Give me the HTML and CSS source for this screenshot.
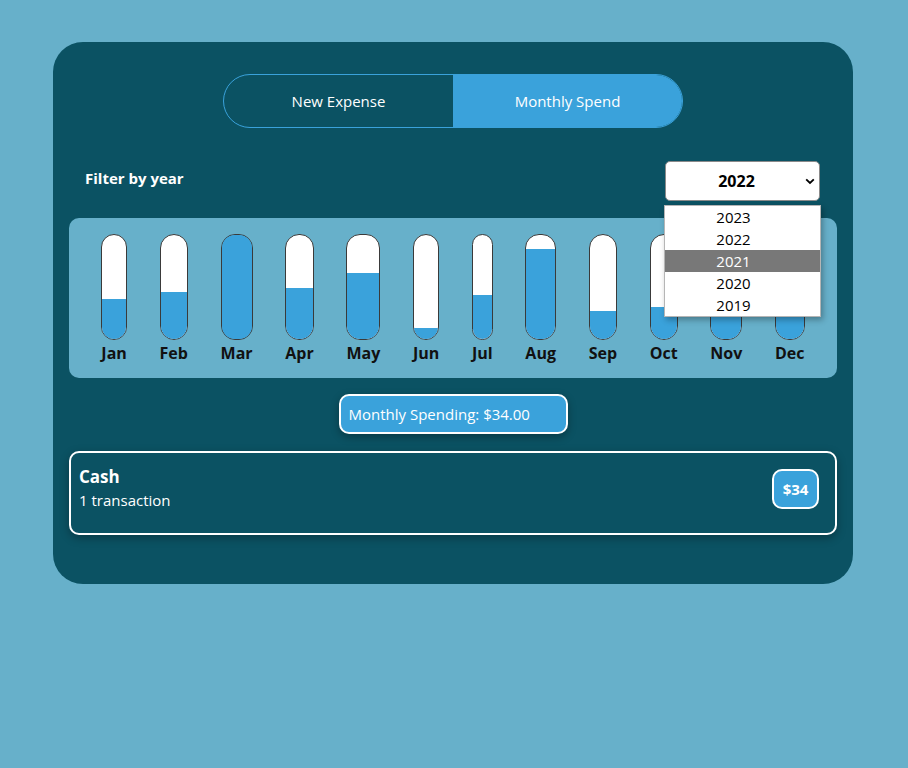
FILE: index.html
```html
<!DOCTYPE html>
<html lang="en">
<head>
<meta charset="utf-8">
<title>Monthly Spend</title>
<link rel="stylesheet" href="styles.css">
</head>
<body>
<main class="card">
  <div class="toggle">
    <button class="toggle-btn">New Expense</button>
    <button class="toggle-btn active">Monthly Spend</button>
  </div>

  <div class="filter-row">
    <span class="filter-label">Filter by year</span>
    <div class="select-wrap">
      <div class="select">
        <span class="select-value">2022</span>
        <svg class="chevron" width="10" height="7" viewBox="0 0 10 7"><path d="M1.2 1.3 L5 5 L8.8 1.3" fill="none" stroke="#000" stroke-width="1.8"/></svg>
      </div>
      <ul class="options">
        <li>2023</li>
        <li>2022</li>
        <li class="hover">2021</li>
        <li>2020</li>
        <li>2019</li>
      </ul>
    </div>
  </div>

  <section class="chart">
    <div class="month"><div class="bar"><div class="fill" style="height:38%"></div></div><span>Jan</span></div>
    <div class="month"><div class="bar"><div class="fill" style="height:45%"></div></div><span>Feb</span></div>
    <div class="month"><div class="bar"><div class="fill" style="height:100%"></div></div><span>Mar</span></div>
    <div class="month"><div class="bar"><div class="fill" style="height:49%"></div></div><span>Apr</span></div>
    <div class="month"><div class="bar"><div class="fill" style="height:63%"></div></div><span>May</span></div>
    <div class="month"><div class="bar"><div class="fill" style="height:11%"></div></div><span>Jun</span></div>
    <div class="month"><div class="bar"><div class="fill" style="height:42%"></div></div><span>Jul</span></div>
    <div class="month"><div class="bar"><div class="fill" style="height:87%"></div></div><span>Aug</span></div>
    <div class="month"><div class="bar"><div class="fill" style="height:27%"></div></div><span>Sep</span></div>
    <div class="month"><div class="bar"><div class="fill" style="height:31%"></div></div><span>Oct</span></div>
    <div class="month"><div class="bar"><div class="fill" style="height:35%"></div></div><span>Nov</span></div>
    <div class="month"><div class="bar"><div class="fill" style="height:40%"></div></div><span>Dec</span></div>
  </section>

  <div class="total-row">
    <div class="total">Monthly Spending: $34.00</div>
  </div>

  <div class="expense">
    <div class="expense-info">
      <div class="expense-title">Cash</div>
      <div class="expense-sub">1 transaction</div>
    </div>
    <div class="badge">$34</div>
  </div>
</main>
</body>
</html>
```

FILE: styles.css
```css
* { box-sizing: border-box; }

html, body {
  margin: 0;
  padding: 0;
}

body {
  background: #67b0ca;
  font-family: "Open Sans", "Noto Sans", sans-serif;
  color: #fff;
  min-height: 768px;
}

.card {
  width: 800px;
  margin: 42px 0 0 53px;
  background: #0b5263;
  border-radius: 30px;
  padding: 32px 16px 49px;
  display: flex;
  flex-direction: column;
}

.toggle {
  align-self: center;
  width: 460px;
  height: 54px;
  display: flex;
  border: 1px solid #3aa2db;
  border-radius: 27px;
  overflow: hidden;
}

.toggle-btn {
  flex: 1;
  border: 0;
  background: transparent;
  color: #fff;
  font-family: inherit;
  font-size: 15px;
  padding: 0;
  cursor: pointer;
}

.toggle-btn.active {
  background: #3aa2db;
}

.filter-row {
  margin-top: 33px;
  display: flex;
  justify-content: space-between;
  align-items: center;
  padding: 0 17px 0 16px;
}

.filter-label {
  font-weight: 700;
  font-size: 15px;
  margin-top: -6px;
}

.select-wrap {
  position: relative;
}

.select {
  width: 155px;
  height: 40px;
  background: #fff;
  border: 1px solid #8a8a8a;
  border-radius: 5px;
  display: flex;
  align-items: center;
  justify-content: center;
  position: relative;
  color: #000;
  font-weight: 700;
  font-size: 16px;
}

.select-value {
  margin-left: -12px;
}

.chevron {
  position: absolute;
  right: 4px;
  top: 16px;
}

.options {
  position: absolute;
  left: -1px;
  top: 44px;
  width: 157px;
  margin: 0;
  padding: 0;
  list-style: none;
  background: #fff;
  border: 1px solid #b5b5b5;
  box-shadow: 2px 3px 6px rgba(0, 0, 0, 0.3);
  z-index: 5;
}

.options li {
  height: 22px;
  line-height: 22px;
  text-align: center;
  color: #000;
  font-size: 15px;
  padding-right: 18px;
}

.options li.hover {
  background: #787878;
  color: #fff;
}

.chart {
  margin-top: 17px;
  background: #67b0ca;
  border-radius: 10px;
  height: 160px;
  padding: 16px 16px 0 16px;
  display: flex;
  justify-content: space-around;
}

.month {
  display: flex;
  flex-direction: column;
  align-items: stretch;
}

.month span {
  color: #111;
  font-weight: 700;
  font-size: 16px;
  line-height: 16px;
  margin-top: 5px;
  text-align: center;
}

.bar {
  height: 106px;
  background: #fff;
  border: 1px solid #3a3a3a;
  border-radius: 14px;
  overflow: hidden;
  display: flex;
  flex-direction: column;
  justify-content: flex-end;
}

.fill {
  background: #3aa2db;
}

.total-row {
  margin-top: 16px;
  display: flex;
  justify-content: center;
}

.total {
  width: 229px;
  height: 40px;
  background: #3aa2db;
  border: 2px solid #fff;
  border-radius: 10px;
  padding-left: 8px;
  display: flex;
  align-items: center;
  font-size: 15px;
  box-shadow: 0 3px 8px rgba(0, 0, 0, 0.3);
}

.expense {
  margin-top: 17px;
  height: 84px;
  border: 2px solid #fff;
  border-radius: 10px;
  padding: 13px 16px 0 8px;
  display: flex;
  justify-content: space-between;
  align-items: flex-start;
  box-shadow: 0 3px 10px rgba(0, 0, 0, 0.3);
}

.expense-title {
  font-weight: 700;
  font-size: 17px;
  line-height: 22px;
}

.expense-sub {
  font-size: 15px;
  line-height: 24px;
}

.badge {
  margin-top: 3px;
  width: 47px;
  height: 40px;
  background: #3aa2db;
  border: 2px solid #fff;
  border-radius: 10px;
  display: flex;
  align-items: center;
  justify-content: center;
  font-weight: 700;
  font-size: 15px;
}
```
